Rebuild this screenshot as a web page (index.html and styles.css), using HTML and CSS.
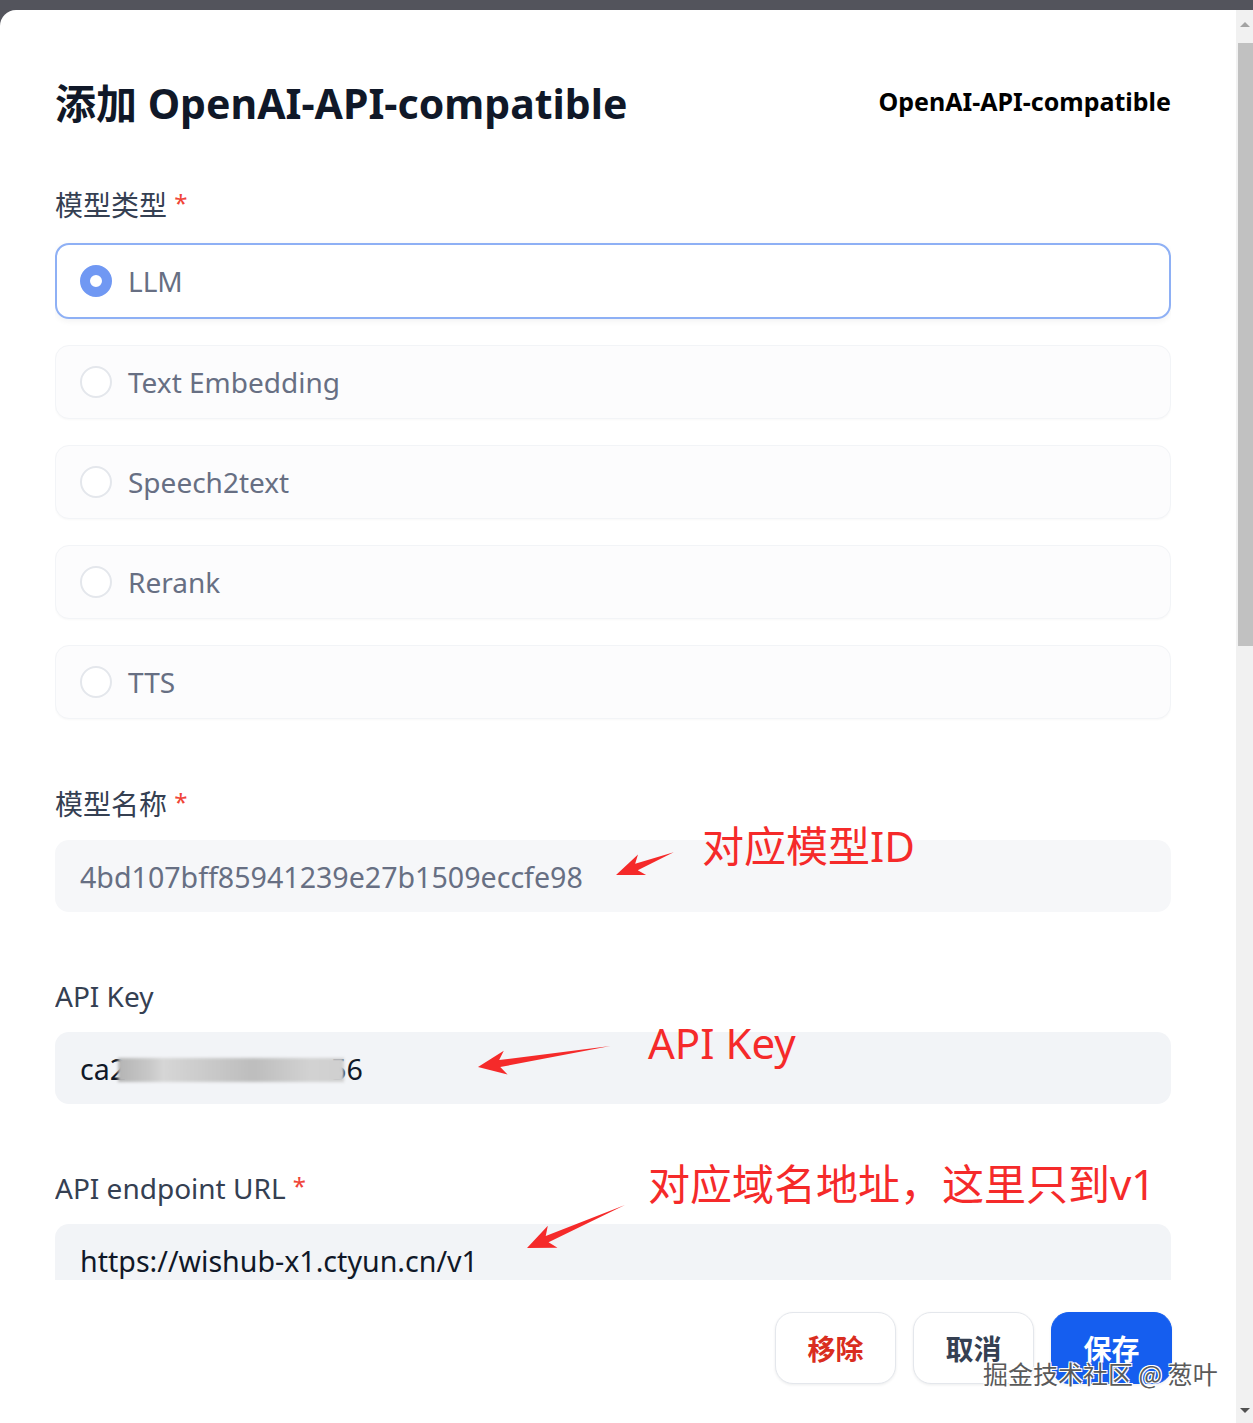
FILE: index.html
```html
<!DOCTYPE html>
<html lang="zh-CN">
<head>
  <meta charset="UTF-8">
  <meta name="viewport" content="width=device-width, initial-scale=1.0">
  <title>添加 OpenAI-API-compatible</title>
  <link rel="stylesheet" href="styles.css">
</head>
<body>
  <div class="page">
    <div class="modal">
      <div class="modal-main">
        <div class="modal-head">
          <h1 class="modal-title">添加 OpenAI-API-compatible</h1>
          <div class="provider-name">OpenAI-API-compatible</div>
        </div>

        <div class="modal-body">
          <div class="field field-type">
            <div class="field-label">模型类型 <span class="req">*</span></div>
            <div class="radio-list">
              <div class="radio-item checked"><span class="radio-dot"></span>LLM</div>
              <div class="radio-item"><span class="radio-dot"></span>Text Embedding</div>
              <div class="radio-item"><span class="radio-dot"></span>Speech2text</div>
              <div class="radio-item"><span class="radio-dot"></span>Rerank</div>
              <div class="radio-item"><span class="radio-dot"></span>TTS</div>
            </div>
          </div>

          <div class="field field-name">
            <div class="field-label">模型名称 <span class="req">*</span></div>
            <div class="input input-muted">4bd107bff85941239e27b1509eccfe98</div>
          </div>

          <div class="field">
            <div class="field-label">API Key</div>
            <div class="input">ca2<span class="secret-mask"></span>56</div>
          </div>

          <div class="field field-url">
            <div class="field-label">API endpoint URL <span class="req">*</span></div>
            <div class="input">https://wishub-x1.ctyun.cn/v1</div>
          </div>
        </div>

        <div class="modal-foot">
          <button class="btn btn-danger">移除</button>
          <button class="btn">取消</button>
          <button class="btn btn-primary">保存</button>
        </div>
      </div>

      <div class="scrollbar">
        <div class="scroll-btn scroll-up"></div>
        <div class="scroll-thumb"></div>
        <div class="scroll-rest"></div>
        <div class="scroll-btn scroll-down"></div>
      </div>
    </div>
  </div>

  <!-- red notes drawn over the screenshot -->
  <div class="notes">
    <svg class="note-arrows" width="1253" height="1423" viewBox="0 0 1253 1423">
      <polygon points="0,0 28,-11 22,-3.5 62,0 22,3.5 28,11" transform="translate(616 875) rotate(-21.6)"/>
      <polygon points="0,0 28,-12 22,-3.5 134,0 22,3.5 28,12" transform="translate(478 1067) rotate(-9)"/>
      <polygon points="0,0 28,-12 22,-3.5 107,0 22,3.5 28,12" transform="translate(527 1248) rotate(-23.7)"/>
    </svg>
    <span class="note note-id">对应模型ID</span>
    <span class="note note-key">API Key</span>
    <span class="note note-url">对应域名地址，这里只到v1</span>
  </div>

  <div class="watermark">掘金技术社区 @ 葱叶</div>
</body>
</html>
```

FILE: styles.css
```css
* {
  box-sizing: border-box;
}

body {
  margin: 0;
  height: 1423px;
  overflow: hidden;
  background: #53545c;
  font-family: "Noto Sans", "Noto Sans CJK SC", sans-serif;
  color: #101828;
}

.page {
  padding-top: 10px;
  height: 1423px;
}

.modal {
  display: flex;
  height: 1413px;
  background: #fff;
  border-top-left-radius: 16px;
  overflow: hidden;
}

.modal-main {
  flex: 1;
  padding: 0 65px 0 55px;
}

.modal-head {
  display: flex;
  align-items: center;
  justify-content: space-between;
  padding-top: 69px;
}

.modal-title {
  margin: 0;
  font-size: 41px;
  line-height: 48px;
  font-weight: 700;
  color: #101828;
}

.provider-name {
  font-size: 25px;
  font-weight: 700;
  color: #000;
  margin-top: -4px;
}

.modal-body {
  height: 1153px;
  overflow: hidden;
}

.field {
  margin-top: 66px;
}

.field-type {
  margin-top: 58px;
}

.field-name {
  margin-top: 65px;
}

.field-url {
  margin-top: 64px;
}

.field-label {
  font-size: 28px;
  line-height: 36px;
  font-weight: 400;
  color: #354052;
  margin-bottom: 18px;
}

.field-type .field-label {
  margin-bottom: 20px;
}

.req {
  color: #f04438;
  font-size: 24px;
  vertical-align: 4px;
}

.radio-list {
  display: flex;
  flex-direction: column;
  gap: 26px;
}

.radio-item {
  display: flex;
  align-items: center;
  gap: 16px;
  height: 74px;
  padding-left: 24px;
  border: 1px solid #f2f4f7;
  border-radius: 14px;
  background: #fcfcfd;
  box-shadow: 0 1px 2px rgba(16, 24, 40, 0.03);
  font-size: 28px;
  color: #676f83;
}

.radio-item.checked {
  height: 76px;
  padding-left: 23px;
  border: 2px solid #8eb0f5;
  background: #fff;
  box-shadow: 0 2px 6px rgba(16, 24, 40, 0.06);
}

.radio-dot {
  width: 32px;
  height: 32px;
  border-radius: 50%;
  border: 2px solid #e4e7ec;
  background: #fff;
  flex-shrink: 0;
}

.checked .radio-dot {
  border: 10px solid #7098f3;
  background: #fff;
}

.input {
  display: flex;
  align-items: center;
  height: 72px;
  padding-left: 25px;
  border-radius: 14px;
  background: #f2f4f7;
  font-size: 28.6px;
  color: #101828;
}

.input-muted {
  background: #f6f7f9;
  color: #676f83;
}

.secret-mask {
  display: inline-block;
  width: 226px;
  height: 24px;
  margin: 4px -14px 0 -8px;
  background: linear-gradient(to right, #b4b4b4 0, #c8c8c8 14%, #d6d6d6 20%, #bdbdbd 60%, #d2d2d2 85%, #cfcfcf 100%);
  filter: blur(1.5px);
  position: relative;
}

.modal-foot {
  display: flex;
  justify-content: flex-end;
  gap: 17px;
  padding-top: 32px;
  margin-right: -1px;
}

.btn {
  width: 121px;
  height: 72px;
  border: 1px solid #e4e7ec;
  border-radius: 18px;
  background: #fff;
  box-shadow: 0 1px 3px rgba(16, 24, 40, 0.08);
  font-family: "Noto Sans CJK SC", sans-serif;
  font-size: 28px;
  font-weight: 700;
  color: #354052;
  cursor: pointer;
}

.btn-danger {
  color: #d92d20;
}

.btn-primary {
  background: #155eef;
  border-color: #155eef;
  color: #fff;
}

/* fake browser scrollbar */
.scrollbar {
  width: 17px;
  display: flex;
  flex-direction: column;
  background: #f1f1f1;
}

.scroll-btn {
  height: 33px;
  display: flex;
  justify-content: center;
  align-items: center;
}

.scroll-up::after {
  content: "";
  border-left: 5px solid transparent;
  border-right: 5px solid transparent;
  border-bottom: 5px solid #a3a3a3;
  margin-top: -4px;
}

.scroll-down {
  height: 26px;
}

.scroll-down::after {
  content: "";
  border-left: 5px solid transparent;
  border-right: 5px solid transparent;
  border-top: 5px solid #505050;
}

.scroll-thumb {
  height: 603px;
  margin-left: 2px;
  background: #c1c1c1;
}

.scroll-rest {
  flex: 1;
}

/* annotations */
.notes {
  position: absolute;
  top: 0;
  left: 0;
  width: 1253px;
  height: 1423px;
  pointer-events: none;
}

.note-arrows {
  position: absolute;
  top: 0;
  left: 0;
  fill: #f52a2a;
}

.note {
  position: absolute;
  font-family: "Noto Sans", "Noto Sans CJK SC", sans-serif;
  font-size: 42px;
  line-height: 1;
  color: #f52a2a;
  white-space: nowrap;
}

.note-id {
  left: 702px;
  top: 825px;
}

.note-key {
  left: 648px;
  top: 1022px;
}

.note-url {
  left: 648px;
  top: 1163px;
}

.watermark {
  position: absolute;
  left: 983px;
  top: 1356px;
  font-family: "Noto Sans CJK SC", sans-serif;
  font-size: 25px;
  line-height: 34px;
  color: #5a5a5a;
  text-shadow: 1px 1px 0 #fff, -1px -1px 0 #fff, 1px -1px 0 #fff, -1px 1px 0 #fff;
  white-space: nowrap;
}
```
